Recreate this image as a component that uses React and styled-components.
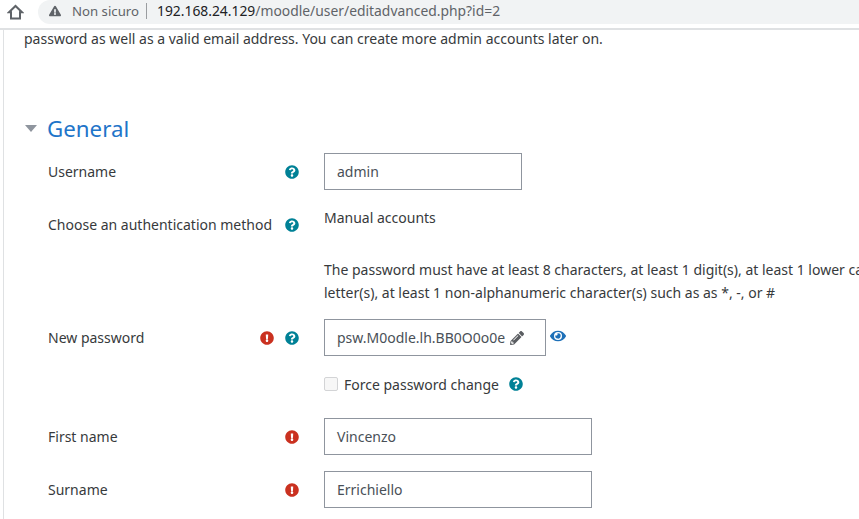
import styled, { createGlobalStyle } from "styled-components"
import { FaExclamationCircle, FaQuestionCircle, FaPencilAlt, FaEye, FaExclamationTriangle } from "react-icons/fa"

const Global = createGlobalStyle`
  html, body {
    margin: 0;
    padding: 0;
    background: #fff;
  }
  body {
    width: 859px;
    height: 519px;
    overflow: hidden;
    font-family: "Noto Sans", "Open Sans", sans-serif;
    font-size: 14px;
    color: #373a3c;
  }
`

const TopBar = styled.div`
  height: 28px;
  display: flex;
  align-items: flex-start;
  background: #fff;
  border-bottom: 2px solid #dfe1e3;
`
const HomeButton = styled.div`
  width: 38px;
  height: 24px;
  display: flex;
  align-items: center;
  padding-left: 7px;
  box-sizing: border-box;
`
const Omnibox = styled.div`
  flex: 1;
  height: 24px;
  display: flex;
  align-items: center;
  padding: 0 0 3px 11px;
  box-sizing: border-box;
  background: #f1f3f4;
  border-radius: 12px 0 0 12px;
  font-size: 13.2px;
  color: #5f6368;
`
const Warn = styled.span`
  display: flex;
  font-size: 12px;
  color: #5f6368;
  margin-right: 11px;
`
const Divider = styled.span`
  width: 1px;
  height: 16px;
  background: #9a9da0;
  margin: 0 10px 0 7px;
`
const Url = styled.span`
  font-size: 13.87px;
`
const Host = styled.span`
  color: #202124;
`

const Page = styled.div`
  margin-left: 3px;
  height: 489px;
  border-left: 1px solid #dfe1e3;
  padding-left: 20px;
  overflow: hidden;
`
const Intro = styled.p`
  margin: 0;
  height: 81px;
  line-height: 18px;
`
const SectionTitle = styled.h3`
  margin: 0 0 8px;
  height: 34px;
  display: flex;
  align-items: center;
  font-size: 22.3px;
  font-weight: 400;
  color: #1f75c9;
`
const Caret = styled.span`
  width: 0;
  height: 0;
  margin: 0 10px 0 1px;
  border-left: 6.5px solid transparent;
  border-right: 6.5px solid transparent;
  border-top: 7px solid #8f959e;
`
const Row = styled.div`
  display: grid;
  grid-template-columns: 24px 276px 1fr;
  align-items: start;
  margin-bottom: ${p => p.$gap || 0}px;
`
const Label = styled.div`
  grid-column: 2;
  display: flex;
  justify-content: space-between;
  align-items: center;
  height: 37px;
  padding-right: 25px;
  white-space: nowrap;
`
const IconGroup = styled.span`
  display: flex;
  align-items: center;
  gap: 11px;
  font-size: 14px;
`
const Help = styled(FaQuestionCircle)`
  color: #008196;
  display: block;
`
const Error = styled(FaExclamationCircle)`
  color: #ca3120;
  display: block;
`
const Field = styled.div`
  grid-column: 3;
`
const FieldRow = styled.div`
  display: flex;
  align-items: flex-start;
`
const Input = styled.div`
  width: ${p => p.$width}px;
  height: 37px;
  box-sizing: border-box;
  border: 1px solid #8f959e;
  padding: 0 12px;
  display: flex;
  align-items: center;
  color: #495057;
  white-space: nowrap;
`
const Pencil = styled(FaPencilAlt)`
  color: #5a5d61;
  font-size: 14px;
  margin-left: 5px;
  flex: none;
`
const Eye = styled(FaEye)`
  color: #1d70b8;
  font-size: 16px;
  margin: 9px 0 0 4px;
`
const Static = styled.div`
  height: 35px;
  line-height: 20px;
  margin-top: 2px;
`
const Note = styled.div`
  width: 600px;
  height: 76px;
  white-space: nowrap;
  line-height: 23px;
  padding-top: 15px;
  box-sizing: border-box;
`
const CheckRow = styled.div`
  display: flex;
  align-items: center;
  height: 28px;
  margin: 14px 0 20px;
`
const Box = styled.span`
  width: 12px;
  height: 12px;
  border: 1px solid #d3d4d6;
  border-radius: 2px;
  background: #f7f7f7;
  margin-right: 6px;
`
const CheckHelp = styled(Help)`
  margin-left: 10px;
  font-size: 14px;
`

const App = () => {
  return (
    <>
      <Global />
      <TopBar>
        <HomeButton>
          <svg width="17" height="16" viewBox="0 0 17 16" fill="none" stroke="#5f6368" strokeWidth="2">
            <path d="M2 8.2 8.5 2 15 8.2H13V14.5H4V8.2Z" />
          </svg>
        </HomeButton>
        <Omnibox>
          <Warn><FaExclamationTriangle /></Warn>
          Non sicuro
          <Divider />
          <Url><Host>192.168.24.129</Host>/moodle/user/editadvanced.php?id=2</Url>
        </Omnibox>
      </TopBar>
      <Page>
        <Intro>password as well as a valid email address. You can create more admin accounts later on.</Intro>
        <SectionTitle>
          <Caret />
          General
        </SectionTitle>
        <Row $gap={16}>
          <Label>Username<IconGroup><Help /></IconGroup></Label>
          <Field><Input $width={198}>admin</Input></Field>
        </Row>
        <Row>
          <Label>Choose an authentication method<IconGroup><Help /></IconGroup></Label>
          <Field><Static>Manual accounts</Static></Field>
        </Row>
        <Note>
          <Row>
            <Field>
              The password must have at least 8 characters, at least 1 digit(s), at least 1 lower case letter(s), at least 1 upper case
              <br />
              letter(s), at least 1 non-alphanumeric character(s) such as as *, -, or #
            </Field>
          </Row>
        </Note>
        <Row>
          <Label>New password<IconGroup><Error /><Help /></IconGroup></Label>
          <Field>
            <FieldRow>
              <Input $width={222}>psw.M0odle.lh.BB0O0o0e<Pencil /></Input>
              <Eye />
            </FieldRow>
            <CheckRow><Box />Force password change<CheckHelp /></CheckRow>
          </Field>
        </Row>
        <Row $gap={16}>
          <Label>First name<IconGroup><Error /></IconGroup></Label>
          <Field><Input $width={268}>Vincenzo</Input></Field>
        </Row>
        <Row>
          <Label>Surname<IconGroup><Error /></IconGroup></Label>
          <Field><Input $width={268}>Errichiello</Input></Field>
        </Row>
      </Page>
    </>
  )
}

export default App
